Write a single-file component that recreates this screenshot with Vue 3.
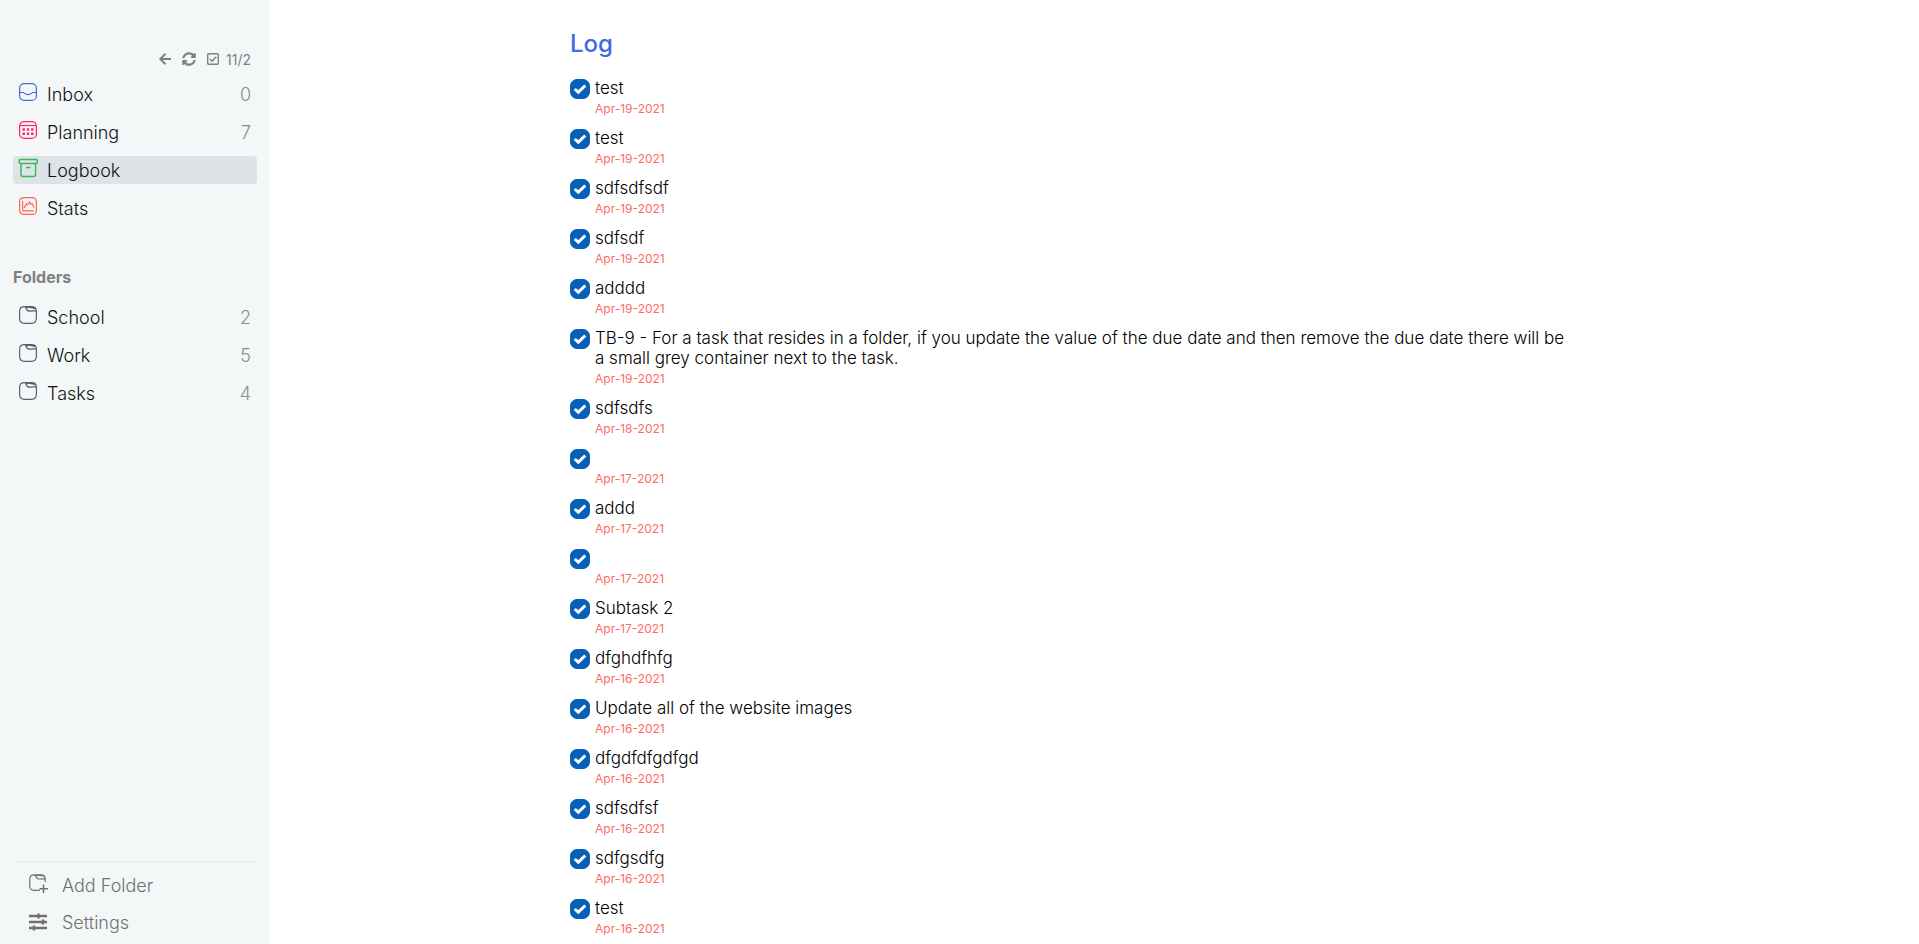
<script setup>
import { ref } from 'vue'

const views = [
  { id: 'inbox', name: 'Inbox', count: 0 },
  { id: 'planning', name: 'Planning', count: 7 },
  { id: 'logbook', name: 'Logbook', count: null },
  { id: 'stats', name: 'Stats', count: null },
]
const active = ref('logbook')

const folders = [
  { name: 'School', count: 2 },
  { name: 'Work', count: 5 },
  { name: 'Tasks', count: 4 },
]

const tasks = ref([
  ['test', 'Apr-19-2021'],
  ['test', 'Apr-19-2021'],
  ['sdfsdfsdf', 'Apr-19-2021'],
  ['sdfsdf', 'Apr-19-2021'],
  ['adddd', 'Apr-19-2021'],
  ['TB-9 - For a task that resides in a folder, if you update the value of the due date and then remove the due date there will be a small grey container next to the task.', 'Apr-19-2021'],
  ['sdfsdfs', 'Apr-18-2021'],
  ['', 'Apr-17-2021'],
  ['addd', 'Apr-17-2021'],
  ['', 'Apr-17-2021'],
  ['Subtask 2', 'Apr-17-2021'],
  ['dfghdfhfg', 'Apr-16-2021'],
  ['Update all of the website images', 'Apr-16-2021'],
  ['dfgdfdfgdfgd', 'Apr-16-2021'],
  ['sdfsdfsf', 'Apr-16-2021'],
  ['sdfgsdfg', 'Apr-16-2021'],
  ['test', 'Apr-16-2021'],
].map(([title, date]) => ({ title, date, done: true })))
</script>

<template>
  <div class="app">
    <aside class="sidebar">
      <div class="tools">
        <button type="button" aria-label="Back">
          <svg width="12" height="14" viewBox="0 0 12 14"><path d="M12 7H1.5M6.5 1.8 1.3 7 6.5 12.2" fill="none" stroke="currentColor" stroke-width="2" /></svg>
        </button>
        <button type="button" aria-label="Refresh">
          <svg width="14" height="14" viewBox="0 0 512 512"><path fill="currentColor" d="M370.72 133.28C339.458 104.008 298.888 87.962 255.848 88c-77.458.068-144.328 53.178-162.791 126.85-1.344 5.363-6.122 9.15-11.651 9.15H24.103c-7.498 0-13.194-6.807-11.807-14.176C33.933 94.924 134.813 8 256 8c66.448 0 126.791 26.136 171.315 68.685L463.03 40.97C478.149 25.851 504 36.559 504 57.941V192c0 13.255-10.745 24-24 24H345.941c-21.382 0-32.09-25.851-16.971-40.971l41.75-41.749zM32 296h134.059c21.382 0 32.09 25.851 16.971 40.971l-41.75 41.75c31.262 29.273 71.835 45.319 114.876 45.28 77.418-.07 144.315-53.144 162.787-126.849 1.344-5.363 6.122-9.15 11.651-9.15h57.304c7.498 0 13.194 6.807 11.807 14.176C478.067 417.076 377.187 504 256 504c-66.448 0-126.791-26.136-171.315-68.685L48.97 471.03C33.851 486.149 8 475.441 8 454.059V320c0-13.255 10.745-24 24-24z" /></svg>
        </button>
        <span class="progress">
          <svg width="12" height="14" viewBox="0 0 12 14"><rect x=".7" y="1.7" width="10.6" height="10.6" rx="1" fill="none" stroke="currentColor" stroke-width="1.4" /><path d="M3 7 5.1 9.2 9.2 4.8" fill="none" stroke="currentColor" stroke-width="1.5" /></svg>
          <span>11/2</span>
        </span>
      </div>

      <nav class="list" aria-label="Views">
        <a
          v-for="view in views"
          :key="view.id"
          href="#"
          class="row"
          :class="[view.id, { active: view.id === active }]"
          @click.prevent="active = view.id"
        >
          <svg v-if="view.id === 'inbox'" class="icon" viewBox="0 0 20 20">
            <rect x="1.6" y="1.6" width="16.8" height="16.8" rx="4.5" />
            <path d="M1.6 10.5h3.2c2 0 1.9 2.2 5.2 2.2s3.2-2.2 5.2-2.2h3.2" />
          </svg>
          <svg v-else-if="view.id === 'planning'" class="icon" viewBox="0 0 20 20">
            <rect x="1.6" y="1.6" width="16.8" height="16.8" rx="4.5" />
            <path d="M1.8 5.5h16.4" />
            <path class="dots" d="M4.5 8.3h2.4v2.4H4.5zM8.8 8.3h2.4v2.4H8.8zM13.1 8.3h2.4v2.4h-2.4zM4.5 12.6h2.4V15H4.5zM8.8 12.6h2.4V15H8.8zM13.1 12.6h2.4V15h-2.4z" />
          </svg>
          <svg v-else-if="view.id === 'logbook'" class="icon" viewBox="0 0 20 20">
            <rect x="1.3" y="1.6" width="18" height="3.8" rx="1" />
            <path d="M3 5.4v11.2q0 1.8 1.8 1.8h11q1.8 0 1.8-1.8V5.4M8 9.6h4.6" />
          </svg>
          <svg v-else class="icon" viewBox="0 0 20 20">
            <rect x="1.6" y="1.6" width="16.8" height="16.8" rx="4" />
            <path d="M4.6 5v9.8h11.2M6 12.2l2.3-4.4 1.4.9 1.9-2.7 1.3 2.1 1.6-.2 1.4 4" />
          </svg>
          <span class="name">{{ view.name }}</span>
          <span v-if="view.count !== null" class="count">{{ view.count }}</span>
        </a>
      </nav>

      <h2 class="heading">Folders</h2>
      <nav class="list" aria-label="Folders">
        <a v-for="folder in folders" :key="folder.name" href="#" class="row folder" @click.prevent>
          <svg class="icon" viewBox="0 0 20 20">
            <path d="M6.5 1.7h7q4.9 0 4.9 4.6v6.4q0 5.6-5 5.6H6.5q-4.9 0-4.9-5V6.5q0-4.8 4.9-4.8 1 0 1.6 1.5 1 3 3.4 3 4.7-.3 6.6-.5M8 2.6q5.6-.6 9 1" />
          </svg>
          <span class="name">{{ folder.name }}</span>
          <span class="count">{{ folder.count }}</span>
        </a>
      </nav>

      <div class="footer">
        <button type="button" class="action">
          <svg class="icon" viewBox="0 0 20 20">
            <path d="M17.2 9V5.8q0-4-4-4H6q-4.3 0-4.3 4.6v6.4q0 4.5 4.3 4.5h6M6.5 1.8q.8.2 1.4 1.7 1 2.5 3 2.5 4.3-.2 6.2-.3M8 2.5q5-.6 8.4.8" />
            <path class="plus" d="M15.5 11.5V20M11.5 15.8H20" />
          </svg>
          <span>Add Folder</span>
        </button>
        <button type="button" class="action">
          <svg class="icon sliders" viewBox="0 0 20 20">
            <path d="M1 4h18M1 10h18M1 16h18" />
            <path d="M10.5 1.5v5M15 7.5v5M6 13.5v5" />
          </svg>
          <span>Settings</span>
        </button>
      </div>
    </aside>

    <main class="main">
      <h1>Log</h1>
      <ul>
        <li v-for="(task, i) in tasks" :key="i">
          <span class="check">
            <input :id="'task-' + i" v-model="task.done" type="checkbox" :aria-label="task.title || 'Untitled task'" />
            <svg v-if="task.done" viewBox="0 0 20 20"><path d="M4.7 10 8.3 13.2 15.3 6.5" /></svg>
          </span>
          <div class="body">
            <label :for="'task-' + i">{{ task.title }}</label>
            <time>{{ task.date }}</time>
          </div>
        </li>
      </ul>
    </main>
  </div>
</template>

<style>
body {
  margin: 0;
  background: #fff;
}
</style>

<style scoped>
.app {
  display: flex;
  min-height: 100vh;
  font-family: Inter, "Liberation Sans", sans-serif;
  font-weight: 300;
  color: #000;
}

button {
  border: 0;
  padding: 0;
  background: none;
  font: inherit;
  color: inherit;
  cursor: pointer;
}

.sidebar {
  box-sizing: border-box;
  display: flex;
  flex-direction: column;
  flex: none;
  width: 270px;
  padding: 50px 13px 0;
  background: #f3f7f8;
}

.tools {
  display: flex;
  align-items: center;
  justify-content: flex-end;
  gap: 11px;
  height: 18px;
  margin-bottom: 12px;
  padding-right: 6px;
  color: #808080;
  font-size: 14px;
  font-weight: 400;
}

.tools svg {
  display: block;
}

.progress {
  display: flex;
  align-items: center;
  gap: 7px;
}

.list {
  display: flex;
  flex-direction: column;
  gap: 10px;
}

.row {
  display: flex;
  align-items: center;
  height: 28px;
  padding: 0 6px 0 5px;
  border-radius: 4px;
  color: #111;
  font-size: 18px;
  text-decoration: none;
}

.row.active {
  background: #dee3e8;
}

.icon {
  flex: none;
  width: 20px;
  height: 20px;
  margin-bottom: 4px;
  fill: none;
  stroke: currentColor;
  stroke-width: 1.2;
}

.inbox .icon { color: #4169e1; }
.planning .icon { color: #ff2667; }
.logbook .icon { color: #3cb954; stroke-width: 1.5; }
.stats .icon { color: #ff6550; }
.folder .icon { color: #5a6070; }

.icon .dots {
  fill: currentColor;
  stroke: none;
}

.name {
  flex: 1;
  margin-left: 9px;
}

.count {
  color: #8c8c8c;
}

.heading {
  margin: 45px 0 16px;
  color: #808080;
  font-size: 16px;
  font-weight: 700;
  line-height: 20px;
}

.footer {
  display: flex;
  flex-direction: column;
  gap: 9px;
  margin-top: auto;
  padding: 9px 0 8px 15px;
  border-top: 1px solid #e8ecee;
}

.action {
  display: flex;
  align-items: center;
  gap: 14px;
  height: 28px;
  color: #707070;
  font-size: 18px;
}

.plus {
  stroke-width: 1.5;
}

.sliders {
  margin-bottom: 0;
  stroke-width: 2.4;
}

.main {
  flex: 1;
  min-width: 0;
  padding: 29px 345px 0 300px;
}

h1 {
  margin: 0 0 19px;
  color: #4169e1;
  font-size: 24px;
  font-weight: 500;
  line-height: 30px;
}

ul {
  display: flex;
  flex-direction: column;
  gap: 8px;
  margin: 0;
  padding: 0;
  list-style: none;
}

li {
  display: flex;
  gap: 5px;
}

.check {
  position: relative;
  flex: none;
  width: 20px;
  height: 20px;
  margin-top: 1px;
}

.check input {
  display: block;
  width: 20px;
  height: 20px;
  margin: 0;
  appearance: none;
  border: 1px solid #0760b8;
  border-radius: 7px;
}

.check input:checked {
  background: #0760b8;
}

.check svg {
  position: absolute;
  inset: 0;
  pointer-events: none;
  fill: none;
  stroke: #fff;
  stroke-width: 3;
}

.body {
  display: flex;
  flex-direction: column;
}

label {
  min-height: 20px;
  font-size: 17px;
  line-height: 20px;
}

time {
  color: #ff6b63;
  font-size: 12px;
  font-weight: 400;
  line-height: 22px;
}
</style>
